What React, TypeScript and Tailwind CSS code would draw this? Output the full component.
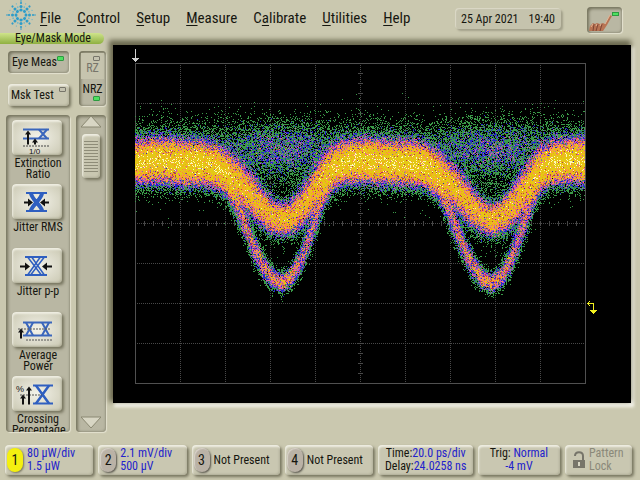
import type { ReactNode } from 'react';

interface Measurement {
    label: string;
    icon: ReactNode;
}

type Point = [number, number];

const PERIOD = 210;

// One bit period of each trace, x is measured from the bottom of the dip
const shallowTrace: Point[] = [
    [-105, 99], [-80, 99], [-66, 102], [-54, 109], [-42, 119], [-30, 131], [-20, 143], [-10, 152],
    [0, 156], [10, 153], [20, 144], [30, 131], [40, 117], [50, 105], [62, 99], [80, 97], [105, 98],
];
const deepTrace: Point[] = [
    [-105, 99], [-80, 101], [-64, 107], [-54, 118], [-45, 138], [-36, 162], [-28, 183], [-18, 203],
    [-9, 215], [0, 220], [9, 214], [18, 199], [26, 179], [33, 158], [40, 134], [48, 112], [60, 99], [80, 97], [105, 98],
];

const levels = [
    { min: 1, color: '#3a9a48' },
    { min: 3, color: '#2424d0' },
    { min: 5, color: '#8860b8' },
    { min: 8, color: '#d850b8' },
    { min: 11, color: '#b83c48' },
    { min: 14, color: '#ff8c58' },
    { min: 20, color: '#f4a418' },
    { min: 28, color: '#e4c814' },
    { min: 110, color: '#fff8b8' },
];

function sample(points: Point[], x: number) {
    for (let i = 1; i < points.length; i++) {
        if (x <= points[i][0]) {
            const [x0, y0] = points[i - 1];
            const [x1, y1] = points[i];
            return { y: y0 + ((x - x0) / (x1 - x0)) * (y1 - y0), slope: (y1 - y0) / (x1 - x0) };
        }
    }
    return { y: points[points.length - 1][1], slope: 0 };
}

function createRandom(seed: number) {
    let a = seed;
    return () => {
        a = (a + 0x6d2b79f5) | 0;
        let t = Math.imul(a ^ (a >>> 15), 1 | a);
        t = (t + Math.imul(t ^ (t >>> 7), 61 | t)) ^ t;
        return ((t ^ (t >>> 14)) >>> 0) / 4294967296;
    };
}

function buildEye() {
    const random = createRandom(25);
    const normal = () => Math.sqrt(-2 * Math.log(random() + 1e-9)) * Math.cos(2 * Math.PI * random());
    const poisson = (mean: number) => {
        if (mean > 25) return Math.round(mean + Math.sqrt(mean) * normal());
        const limit = Math.exp(-mean);
        let n = 0;
        for (let p = random(); p > limit; p *= random()) n++;
        return n;
    };
    const bell = (d: number, s: number) => Math.exp((-d * d) / (2 * s * s));
    const paths = levels.map(() => '');

    for (let x = 0; x < 450; x++) {
        const dx = ((x - 146 + PERIOD * 2 + 105) % PERIOD) - 105;
        const shallow = sample(shallowTrace, dx);
        const deep = sample(deepTrace, dx);
        const dip = bell(dx, 34);
        const flat = 1 - Math.min(1, dip * 1.05);
        const s1 = Math.hypot(10 - 2.5 * dip, shallow.slope * 5);
        const s2 = Math.hypot(10 - 5.5 * Math.min(1, dip * 1.6), deep.slope * 2.4);

        for (let y = 30; y < 250; y++) {
            const d1 = y - shallow.y;
            let rate = (32 + 28 * flat) * (8 / s1) * bell(d1, s1);
            rate += (16 + 10 * flat) * (4.5 / s2) * bell(y - deep.y, s2);
            rate += 2.7 * dip * bell(y - 87, 13);
            rate += 0.15 * dip * bell(y - 115, 14);
            rate += 0.4 * bell(y - 76, 12);
            rate += 0.15 * bell(d1, 17);
            const hits = poisson(rate * Math.exp(0.65 * normal()));
            let level = -1;
            levels.forEach((l, i) => {
                if (hits >= l.min) level = i;
            });
            if (level >= 0) paths[level] += `M${x} ${y}h1v1h-1z`;
        }
    }
    return paths;
}

const eyePaths = buildEye();

const measurements: Measurement[] = [
    {
        label: 'Extinction Ratio',
        icon: (
            <>
                <g stroke="#3a66bc" fill="none" strokeWidth="2">
                    <path d="M11 9h26M11 18h26" />
                    <path d="M27 9l8 9M35 9l-8 9" />
                </g>
                <path d="M16 24V12M23 24v-4" stroke="#111" strokeWidth="2" />
                <path d="M13 14l3-4 3 4zM20 22l3-4 3 4z" fill="#111" />
                <path d="M11 25.500h27" stroke="#444" strokeDasharray="2 1" />
                <text x="17" y="33" fontSize="8" fontFamily="Liberation Sans" fill="#111">1/0</text>
            </>
        ),
    },
    {
        label: 'Jitter RMS',
        icon: (
            <>
                <g stroke="#2f5fc0" fill="none">
                    <path d="M14 8.500h21M14 26.500h21" strokeWidth="2" />
                    <path d="M19 9c1 6 10 12 11 17M30 9c-1 6-10 12-11 17" strokeWidth="4" />
                </g>
                <path d="M12 18h5M37 18h-5" stroke="#111" strokeWidth="2" />
                <path d="M16 14l5 4-5 4zM33 14l-5 4 5 4z" fill="#111" />
            </>
        ),
    },
    {
        label: 'Jitter p-p',
        icon: (
            <>
                <g stroke="#2f5fc0" fill="none">
                    <path d="M13 8.500h22M13 26.500h22" strokeWidth="2" />
                    <path d="M16 9l13 17M32 9L19 26M20 9l12 17M28 9L16 26" strokeWidth="1.500" />
                </g>
                <path d="M8 18h6M40 18h-6" stroke="#111" strokeWidth="2" />
                <path d="M13 14l5 4-5 4zM35 14l-5 4 5 4z" fill="#111" />
            </>
        ),
    },
    {
        label: 'Average Power',
        icon: (
            <>
                <g stroke="#3a66bc" fill="none" strokeWidth="2">
                    <path d="M11 10h29M11 23h29" />
                    <path d="M14 10l7 13M21 10l-7 13M30 10l7 13M37 10l-7 13" />
                </g>
                <path d="M6 16.500h33M14 27.500h26" stroke="#555" strokeDasharray="2 1" />
                <path d="M9 26v-7" stroke="#111" strokeWidth="2" />
                <path d="M6 20l3-4 3 4z" fill="#111" />
            </>
        ),
    },
    {
        label: 'Crossing Percentage',
        icon: (
            <>
                <g stroke="#2f5fc0" fill="none" strokeWidth="2">
                    <path d="M21 9h20M21 27h20" />
                    <path d="M24 9l13 18M37 9L24 27" strokeWidth="2.500" />
                </g>
                <path d="M8 18.500h22" stroke="#555" strokeDasharray="2 1" />
                <path d="M11 28v-7M17 28V13" stroke="#111" strokeWidth="2" />
                <path d="M8 22l3-4 3 4zM14 14l3-4 3 4z" fill="#111" />
                <text x="4" y="15" fontSize="9" fontFamily="Liberation Sans" fill="#111">%</text>
            </>
        ),
    },
];

const menus = [
    ['', 'F', 'ile'],
    ['', 'C', 'ontrol'],
    ['', 'S', 'etup'],
    ['', 'M', 'easure'],
    ['C', 'a', 'librate'],
    ['', 'U', 'tilities'],
    ['', 'H', 'elp'],
];

const channels = [
    { id: 1, lines: ['80 µW/div', '1.5 µW'], active: true },
    { id: 2, lines: ['2.1 mV/div', '500 µV'], active: false },
    { id: 3, lines: ['Not Present'], active: false },
    { id: 4, lines: ['Not Present'], active: false },
];

const raised =
    'rounded-sm bg-[#c9c7b1] shadow-[inset_1px_2px_2px_#efeee2,inset_-1px_-1px_2px_#b0ae98,2px_2px_3px_#77755f]';
const sunken = 'rounded-sm bg-[#b9b7a3] shadow-[inset_2px_2px_3px_#77755f,inset_-1px_-1px_2px_#9a9884,1px_1px_1px_#e4e2d0]';

function Led({ on }: { on: boolean }) {
    return on ? (
        <span className="block h-[5px] w-[7px] rounded-[1px] border border-[#2d9a40] bg-[#4ee060]" />
    ) : (
        <span className="block h-[5px] w-[7px] rounded-[1px] border border-[#77756a] bg-[#c4c2b0]" />
    );
}

function Logo() {
    const rings = [
        { r: 5, size: 1.5 },
        { r: 8.5, size: 1.5 },
        { r: 12, size: 1.1 },
    ];
    return (
        <svg viewBox="-15 -15 30 30" className="size-[30px] shrink-0" role="img" aria-label="Logo">
            {Array.from({ length: 16 }, (_, i) => (
                <g key={i} transform={`rotate(${i * 22.5})`} fill={i % 2 ? '#6fb8cc' : '#2f9cc8'}>
                    {rings.map((ring) => (
                        <circle key={ring.r} cx={ring.r} r={i % 2 ? ring.size * 0.6 : ring.size} />
                    ))}
                    {i % 4 === 0 && <circle cx="14" r="0.8" />}
                </g>
            ))}
        </svg>
    );
}

function Header() {
    return (
        <header className="flex h-[33px] shrink-0 items-start pr-[18px] pl-[6px]">
            <Logo />
            <nav className="ml-1 flex gap-4 pt-2">
                {menus.map(([before, key, after]) => (
                    <button key={key + after} type="button" className="text-[15px] leading-5">
                        {before}
                        <span className="underline underline-offset-2">{key}</span>
                        {after}
                    </button>
                ))}
            </nav>
            <div className="mt-2 ml-auto flex h-[21px] items-center gap-[10px] rounded-sm bg-[#c5c3ad] px-1.5 text-[12px] whitespace-nowrap shadow-[inset_1px_1px_1px_#dcdac8,2px_2px_2px_#a3a18b]">
                <span>25 Apr 2021</span>
                <span>19:40</span>
            </div>
            <button type="button" aria-label="Touch screen" className={`mt-[7px] ml-[26px] h-[26px] w-[35px] shrink-0 ${sunken}`}>
                <svg viewBox="0 0 35 26" className="size-full">
                    <path d="M2 24l1-5 3-3 2 1 2-1 3 1 3-1 2 1 5-9 2 1-5 9-4 6z" fill="#b87454" />
                    <path d="M7 17l-1 7M11 17l-2 7M15 17l-2 7" stroke="#7e4434" />
                    <path d="M18 17l5-9M4 20l2-3M9 19l1-2M13 19l1-2" stroke="#e4b494" />
                    <rect x="25.500" y="5.500" width="6" height="3" fill="#4ee060" stroke="#2d9a40" />
                </svg>
            </button>
        </header>
    );
}

function Sidebar() {
    return (
        <aside className="flex w-[106px] shrink-0 flex-col">
            <h1 className="h-[11px] w-[104px] rounded-r-full bg-linear-to-b from-[#cfe48a] to-[#8fb040] pl-[15px] text-[12px] leading-[11px] whitespace-nowrap">
                Eye/Mask Mode
            </h1>
            <div className="mt-[7px] flex justify-between pl-[8px]">
                <div className="flex flex-col gap-[11px] text-[12px] whitespace-nowrap">
                    <button type="button" className={`relative h-[22px] w-[61px] pl-1 text-left ${sunken}`}>
                        Eye Meas
                        <span className="absolute top-[5px] right-[5px]"><Led on /></span>
                    </button>
                    <button type="button" className={`relative h-[22px] w-[61px] pl-[3px] text-left ${raised}`}>
                        Msk Test
                        <span className="absolute top-[3px] right-[3px]"><Led on={false} /></span>
                    </button>
                </div>
                <div className={`flex w-[27px] flex-col p-0.5 text-[12px] leading-[14px] ${sunken}`}>
                    <button type="button" className="flex flex-1 flex-col items-center justify-center bg-[#c6c4ae] text-[#77756a]">
                        <span className="self-end pr-1"><Led on={false} /></span>
                        RZ
                    </button>
                    <button type="button" className="flex flex-1 flex-col items-center justify-center">
                        NRZ
                        <span className="self-end pr-1"><Led on /></span>
                    </button>
                </div>
            </div>
            <div className="mt-[9px] flex min-h-0 flex-1 justify-between pl-[6px]">
                <ul className={`flex w-[64px] flex-col overflow-hidden px-[6px] pt-[5px] ${sunken}`}>
                    {measurements.map((m) => (
                        <li key={m.label} className="h-16 shrink-0">
                            <button type="button" className="w-full text-center text-[12px] leading-[11px]">
                                <span className={`block h-[35px] w-[50px] bg-radial from-[#f4f3ea] to-[#c9c7b1] ${raised}`}>
                                    <svg viewBox="0 0 50 34" className="size-full">{m.icon}</svg>
                                </span>
                                <span className="mt-[3px] block">{m.label}</span>
                            </button>
                        </li>
                    ))}
                </ul>
                <div className={`flex w-[30px] flex-col items-center px-1 ${sunken}`}>
                    <button type="button" aria-label="Scroll up" className="pt-px">
                        <svg viewBox="0 0 20 12" className="h-3 w-5">
                            <path d="M0 11L10 0l10 11z" fill="#d8d6c4" stroke="#8a8872" />
                        </svg>
                    </button>
                    <div className={`mt-1.5 flex h-[44px] w-[18px] flex-col justify-center gap-[2px] px-0.5 ${raised}`}>
                        {Array.from({ length: 11 }, (_, i) => (
                            <span key={i} className="h-px bg-[#8e8c78]" />
                        ))}
                    </div>
                    <button type="button" aria-label="Scroll down" className="mt-auto pb-1">
                        <svg viewBox="0 0 20 12" className="h-3 w-5">
                            <path d="M0 1h20L10 12z" fill="#d8d6c4" stroke="#8a8872" />
                        </svg>
                    </button>
                </div>
            </div>
        </aside>
    );
}

function Screen() {
    const cols = Array.from({ length: 9 }, (_, i) => (i + 1) * 45 + 0.5);
    const rows = Array.from({ length: 7 }, (_, i) => (i + 1) * 40 + 0.5);
    return (
        <main className="flex min-w-0 flex-1 pt-3 pr-[9px] pb-[29px] pl-[7px]">
            <div className="flex-1 bg-black shadow-[-2px_-3px_5px_2px_#6b694f,2px_3px_3px_1px_#fbfaf2]">
                <svg viewBox="0 0 518 358" className="size-full" role="img" aria-label="Eye diagram" shapeRendering="crispEdges">
                    <g transform="translate(22 18)">
                        <g stroke="#484848" strokeDasharray="1 1">
                            {cols.map((x) => <path key={x} d={`M${x} 0V320`} />)}
                            {rows.map((y) => <path key={y} d={`M0 ${y}H450`} />)}
                        </g>
                        <g stroke="#484848">
                            {Array.from({ length: 31 }, (_, i) => (
                                <path key={i} d={`M223 ${(i + 1) * 10 + 0.5}h5`} />
                            ))}
                            {Array.from({ length: 49 }, (_, i) => (
                                <path key={i} d={`M${(i + 1) * 9 + 0.5} 158v5`} />
                            ))}
                        </g>
                        <rect x="0.5" y="0.5" width="450" height="320" fill="none" stroke="#505050" />
                        {eyePaths.map((d, i) => <path key={i} d={d} fill={levels[i].color} />)}
                        <path d="M0.500 -14v10" stroke="#d0d0d0" />
                        <path d="M-3 -5h7l-3.500 4z" fill="#d0d0d0" />
                        <path d="M453 240.500h5.500v8M455 238l-2.500 2.500 2.500 2.500" fill="none" stroke="#f2f020" />
                        <path d="M455 247h7l-3.500 4z" fill="#f2f020" />
                    </g>
                </svg>
            </div>
        </main>
    );
}

function Footer() {
    return (
        <footer className="flex h-[30px] shrink-0 gap-[5px] pr-[8px] pl-[5px] text-[12px] leading-[13px] whitespace-nowrap">
            {channels.map((c) => (
                <button key={c.id} type="button" className={`flex flex-[87] items-center gap-1 pl-0.5 text-left ${raised}`}>
                    <span
                        className={`flex h-[24px] w-[16px] shrink-0 items-center justify-center rounded-full text-[14px] ${
                            c.active
                                ? 'bg-[#f4f010] shadow-[1px_1px_2px_#77755f]'
                                : 'bg-[#bab2a6] shadow-[inset_1px_1px_1px_#d8d2c8,1px_1px_2px_#55534a]'
                        }`}
                    >
                        {c.id}
                    </span>
                    <span className={c.lines.length > 1 ? 'text-[#2222cc]' : ''}>
                        {c.lines.map((line) => <span key={line} className="block">{line}</span>)}
                    </span>
                </button>
            ))}
            <button type="button" className={`flex-[96] ${raised}`}>
                <span className="block">Time:<span className="text-[#2222cc]">20.0 ps/div</span></span>
                <span className="block">Delay:<span className="text-[#2222cc]">24.0258 ns</span></span>
            </button>
            <button type="button" className={`flex-[82] ${raised}`}>
                <span className="block">Trig: <span className="text-[#2222cc]">Normal</span></span>
                <span className="block text-[#2222cc]">-4 mV</span>
            </button>
            <button type="button" className={`flex flex-[68] items-center justify-center gap-1 text-left text-[#8b897a] ${raised}`}>
                <svg viewBox="0 0 12 18" className="h-[18px] w-3 shrink-0">
                    <path d="M2 5c0-5 8-5 8 0v5" fill="none" stroke="#77756a" strokeWidth="2" />
                    <path d="M0 9h12v8H0z" fill="#77756a" />
                    <path d="M6 11v4" stroke="#d8d6c4" strokeWidth="2" />
                </svg>
                <span>Pattern<br />Lock</span>
            </button>
        </footer>
    );
}

export default function App() {
    return (
        <div className="flex h-screen min-h-[480px] flex-col overflow-hidden bg-[#cac8af] pb-[5px] font-['Roboto_Condensed',Roboto,sans-serif] text-[#16160f]">
            <Header />
            <div className="mb-[13px] flex min-h-0 flex-1">
                <Sidebar />
                <Screen />
            </div>
            <Footer />
        </div>
    );
}
